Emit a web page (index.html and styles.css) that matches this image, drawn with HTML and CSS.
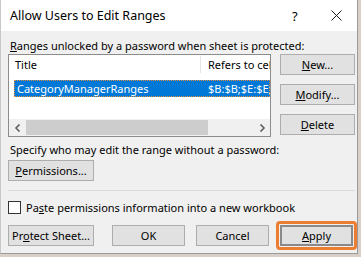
FILE: index.html
```html
<!DOCTYPE html>
<html lang="en">
<head>
    <meta charset="UTF-8">
    <meta name="viewport" content="width=device-width, initial-scale=1.0">
    <title>Allow Users to Edit Ranges</title>
    <link rel="stylesheet" href="styles.css">
</head>
<body>
    <div class="dialog">
        <div class="titlebar">
            <span class="title">Allow Users to Edit Ranges</span>
            <span class="help">?</span>
            <svg class="close" width="11" height="11" viewBox="0 0 11 11">
                <path d="M0.5 0.5 L10.5 10.5 M10.5 0.5 L0.5 10.5" stroke="#1a1a1a" stroke-width="1" fill="none"/>
            </svg>
        </div>

        <div class="content">
            <div class="top">
                <div class="left">
                    <div class="label"><u>R</u>anges unlocked by a password when sheet is protected:</div>
                    <div class="listbox">
                        <div class="list-head">
                            <div class="col-title">Title</div>
                            <div class="col-refs">Refers to cells</div>
                        </div>
                        <div class="list-row selected">
                            <div class="col-title">CategoryManagerRanges</div>
                            <div class="col-refs">$B:$B;$E:$E;</div>
                        </div>
                        <div class="list-space"></div>
                        <div class="hscroll">
                            <span class="arrow">
                                <svg width="8" height="8" viewBox="0 0 8 8"><path d="M5.5 0.5 L2 4 L5.5 7.5" stroke="#606060" stroke-width="1.6" fill="none"/></svg>
                            </span>
                            <span class="thumb"></span>
                            <span class="track"></span>
                            <span class="arrow">
                                <svg width="8" height="8" viewBox="0 0 8 8"><path d="M2.5 0.5 L6 4 L2.5 7.5" stroke="#606060" stroke-width="1.6" fill="none"/></svg>
                            </span>
                        </div>
                    </div>
                </div>
                <div class="side-buttons">
                    <button class="btn"><u>N</u>ew...</button>
                    <button class="btn"><u>M</u>odify...</button>
                    <button class="btn"><u>D</u>elete</button>
                </div>
            </div>

            <div class="label specify">Specify who may edit the range without a password:</div>
            <button class="btn wide"><u>P</u>ermissions...</button>

            <div class="separator"></div>

            <label class="check">
                <span class="box"></span>
                <span>Pa<u>s</u>te permissions information into a new workbook</span>
            </label>

            <div class="bottom">
                <button class="btn wide">Pr<u>o</u>tect Sheet...</button>
                <button class="btn ok">OK</button>
                <button class="btn">Cancel</button>
                <span class="highlight"><button class="btn default"><u>A</u>pply</button></span>
            </div>
        </div>
    </div>
</body>
</html>
```

FILE: styles.css
```css
body {
    margin: 0;
    background-color: #d8cfc9;
    font-family: "Noto Sans", "Open Sans", sans-serif;
    font-size: 11px;
    color: #000;
}
.dialog {
    width: 358px;
    height: 254px;
    background-color: #f0f0f0;
    border: 1px solid #9a9a9a;
    border-top: none;
    border-left-color: #c8c8c8;
    box-sizing: border-box;
    display: flex;
    flex-direction: column;
}
.titlebar {
    height: 31px;
    background-color: #fff;
    display: flex;
    align-items: center;
    padding-left: 9px;
    font-size: 12.5px;
}
.title {
    flex: 1;
}
.help {
    width: 10px;
    margin-right: 29px;
    font-size: 13px;
}
.close {
    margin-right: 15px;
}
.content {
    padding: 7px 0 0 7px;
}
.top {
    display: flex;
    gap: 9px;
}
.left {
    width: 263px;
}
.label {
    padding-left: 2px;
    height: 15px;
    line-height: 15px;
    white-space: nowrap;
}
.listbox {
    margin-top: 1px;
    height: 83px;
    border: 1px solid #8c8c8c;
    background-color: #fff;
    box-sizing: border-box;
    display: flex;
    flex-direction: column;
    overflow: hidden;
}
.list-head, .list-row {
    display: flex;
    white-space: nowrap;
    height: 17px;
    line-height: 17px;
}
.list-head {
    margin-top: 1px;
}
.list-head .col-title {
    border-right: 1px solid #e5e5e5;
}
.col-title {
    width: 192px;
    padding-left: 6px;
    flex-shrink: 0;
    box-sizing: border-box;
}
.col-refs {
    flex: 1;
    min-width: 0;
    overflow: hidden;
    padding-left: 7px;
}
.list-row {
    margin: 7px 0 0 5px;
}
.list-row .col-title {
    width: 190px;
    padding-left: 3px;
}
.list-row .col-refs {
    padding-left: 4px;
}
.selected {
    background-color: #0078d7;
    color: #fff;
    outline: 1px dotted #e08a3c;
    outline-offset: -1px;
}
.list-space {
    flex: 1;
}
.hscroll {
    height: 17px;
    background-color: #f0f0f0;
    display: flex;
    align-items: center;
}
.arrow {
    width: 17px;
    display: flex;
    justify-content: center;
}
.thumb {
    width: 182px;
    height: 15px;
    background-color: #cdcdcd;
}
.track {
    flex: 1;
}
.side-buttons {
    padding-top: 16px;
    display: flex;
    flex-direction: column;
    gap: 9px;
}
.btn {
    width: 75px;
    height: 21px;
    padding: 0;
    background-color: #e1e1e1;
    border: 1px solid #adadad;
    font-family: inherit;
    font-size: 11px;
    color: #000;
}
.btn.wide {
    width: 86px;
}
.specify {
    margin-top: 5px;
}
.content > .btn.wide {
    margin-top: 3px;
}
.separator {
    width: 347px;
    height: 1px;
    margin-top: 9px;
    background-color: #dadada;
}
.check {
    display: flex;
    align-items: center;
    gap: 5px;
    margin-top: 10px;
    height: 13px;
}
.box {
    width: 13px;
    height: 13px;
    border: 1px solid #333;
    background-color: #fff;
    box-sizing: border-box;
}
.bottom {
    display: flex;
    align-items: center;
    margin-top: 7px;
}
.bottom .btn {
    width: 73px;
    margin-left: 11px;
}
.bottom .btn.wide {
    width: 86px;
    margin-left: 0;
}
.bottom .btn.ok {
    margin-left: 18px;
}
.highlight {
    margin-left: 7px;
    padding: 1px;
    border: 3px solid #ed7d31;
    border-radius: 4px;
}
.bottom .highlight .btn {
    margin-left: 0;
}
.btn.default {
    border: 2px solid #8a8a8a;
}
```
